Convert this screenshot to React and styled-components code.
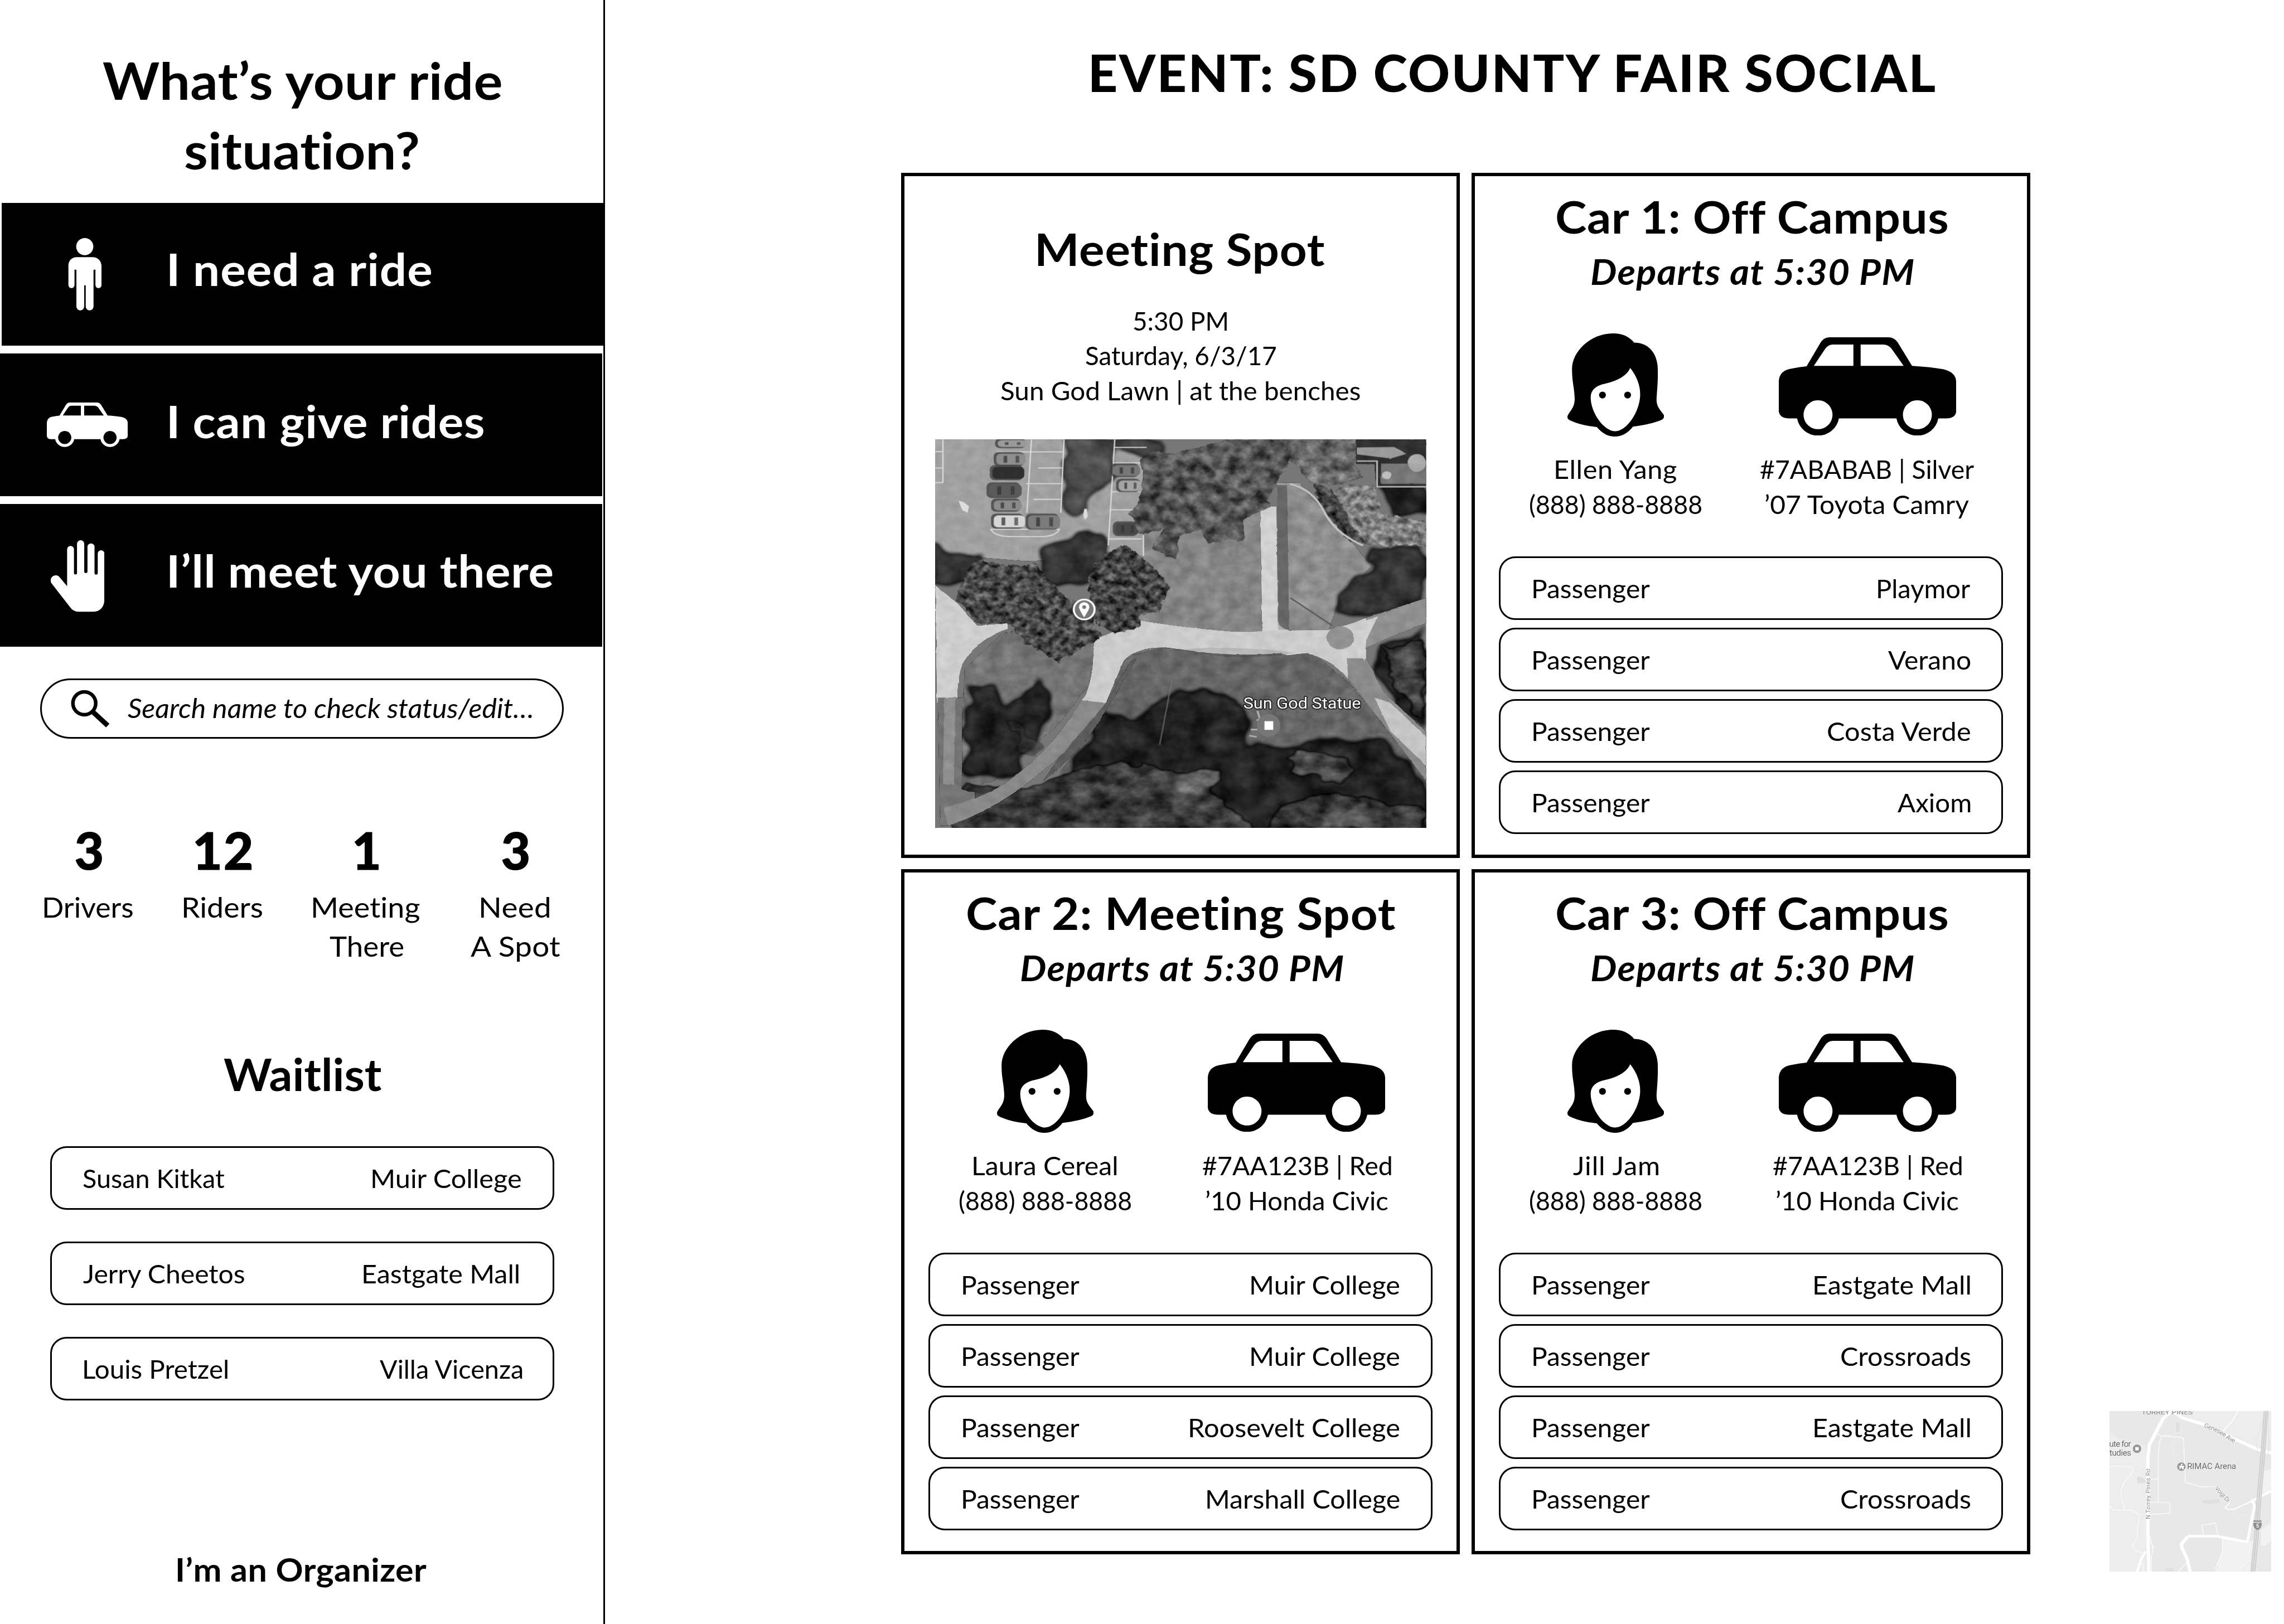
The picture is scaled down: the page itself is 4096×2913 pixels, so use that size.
import React, { useLayoutEffect, useRef, useState } from "react";
import styled, { createGlobalStyle } from "styled-components";

/* The design grid is 6000 units wide; u() converts a grid length to pixels. */
const u = (n) => `${((n * 4096) / 6000).toFixed(3)}px`;

const Global = createGlobalStyle`
  * { box-sizing: border-box; margin: 0; padding: 0; }
  body { background: #fff; color: #000; font-family: Lato, "Open Sans", sans-serif; overflow: hidden; }
`;

/* ---------- text ---------- */

const Ink = styled.span`
  display: inline-block;
  white-space: pre;
  font-variant-ligatures: none;
  transform-origin: 0 50%;
`;

/* Widens and tracks a run of text so that its ink is exactly `w` grid units wide. */
function Fit({ w, max = 1.07, children }) {
  const ref = useRef(null);
  const [style, setStyle] = useState({});
  useLayoutEffect(() => {
    const el = ref.current;
    const cs = getComputedStyle(el);
    const ctx = document.createElement("canvas").getContext("2d");
    ctx.font = `${cs.fontStyle} ${cs.fontWeight} ${cs.fontSize} ${cs.fontFamily}`;
    const m = ctx.measureText(children);
    const left = -m.actualBoundingBoxLeft;
    const right = m.width - m.actualBoundingBoxRight;
    const advance = el.offsetWidth;
    const natural = advance - left - right;
    const target = w ? (w * 4096) / 6000 : natural;
    const stretch = Math.max(0.97, Math.min(max, target / natural));
    const gaps = children.length - 1;
    const tracking = gaps > 0 ? (target / stretch - natural) / gaps : 0;
    const box = advance + tracking * children.length;
    setStyle({
      letterSpacing: `${tracking}px`,
      transform: `scaleX(${stretch})`,
      marginLeft: `${-left * stretch}px`,
      marginRight: `${target + left * stretch - box}px`,
    });
  }, [w, max, children]);
  return (
    <Ink ref={ref} style={style}>
      {children}
    </Ink>
  );
}

const Line = styled.div`
  display: flex;
  justify-content: center;
  height: ${(p) => u(p.$h)};
  padding-top: ${u(3)};
  line-height: ${(p) => u(p.$h)};
  font-size: ${(p) => u(p.$size)};
`;

const Display = styled(Line).attrs({ $size: 133.3 })`
  font-weight: 700;
`;
const Heading = styled(Line).attrs({ $size: 116.7, $h: 140 })`
  padding-left: ${u(5)};
  font-weight: 700;
`;
const Sub = styled(Line).attrs({ $size: 91.7, $h: 110 })`
  font-weight: 700;
  font-style: italic;
  margin-top: ${u(18.5)};
  padding-left: ${u(9)};
`;
const Body = styled(Line).attrs({ $size: 66.7, $h: 91.7 })`
  padding-left: ${u(1)};
  font-weight: 400;
`;

/* ---------- page ---------- */

const Page = styled.div`
  display: flex;
  width: 4096px;
  height: 2913px;
  background: #fff;
`;

const Sidebar = styled.aside`
  display: flex;
  flex-direction: column;
  flex: none;
  width: ${u(1589.5)};
  padding-top: ${u(115.5)};
  border-right: 3px solid #000;
`;

const Choices = styled.nav`
  display: flex;
  flex-direction: column;
  gap: ${u(21)};
  margin-top: ${u(50.5)};
`;

const Choice = styled.button`
  display: flex;
  align-items: center;
  height: ${u(374.7)};
  margin-left: ${(p) => (p.$inset ? "3px" : "0")};
  margin-right: ${(p) => (p.$inset ? "0" : "2px")};
  border: 0;
  background: #000;
  color: #fff;
  font: 700 ${u(116.7)} Lato, sans-serif;
  text-align: left;
`;

const ChoiceIcon = styled.span`
  display: flex;
  flex: none;
  width: ${(p) => u(p.$inset ? 441.5 : 446)};
  padding-left: ${(p) => u(p.$pad)};
  padding-top: ${(p) => u(p.$drop || 0)};
`;

const ChoiceLabel = styled.span`
  line-height: ${u(140)};
  padding-bottom: ${(p) => u(p.$lift)};
`;

const Search = styled.label`
  display: flex;
  align-items: center;
  width: ${u(1375)};
  height: ${u(158)};
  margin: ${u(84)} 0 0 ${u(106)};
  padding-left: ${u(75.5)};
  border: 3px solid #000;
  border-radius: ${u(79)};
  font-size: ${u(70)};
  font-style: italic;
`;

const SearchText = styled.span`
  margin-left: ${u(49)};
  padding-bottom: ${u(5)};
`;

const Stats = styled.section`
  display: flex;
  justify-content: space-between;
  margin: ${u(224)} ${u(114)} 0 ${u(116)};
`;

const Stat = styled.div`
  display: flex;
  flex-direction: column;
`;

const Count = styled(Line).attrs({ $size: 133.3, $h: 133 })`
  font-weight: 900;
  -webkit-text-stroke: ${u(1.5)} #000;
  margin-bottom: ${u(29.5)};
`;

const StatLabel = styled(Line).attrs({ $size: 75, $h: 103 })``;

const Waitlist = styled.section`
  margin-top: ${u(216)};
`;

const Pills = styled.ul`
  display: flex;
  flex-direction: column;
  list-style: none;
  gap: ${(p) => u(p.$gap)};
  margin: ${(p) => u(p.$top)} 0 0 ${(p) => u(p.$left)};
`;

const Pill = styled.li`
  display: flex;
  align-items: center;
  justify-content: space-between;
  width: ${u(1324)};
  height: ${u(167)};
  padding: ${u(1.5)} ${(p) => u((p.$end || 86) - 4.4)} 0 ${(p) => u(p.$start || 86.5)};
  border: 3px solid #000;
  border-radius: ${u(43)};
  font-size: ${u(66.7)};
`;

const Organizer = styled(Line).attrs({ $size: 83.3, $h: 100 })`
  font-weight: 700;
  margin-top: ${u(390)};
  padding-left: ${u(3)};
`;

const Main = styled.main`
  flex: 1;
  padding-top: ${u(107.5)};
`;

const EventTitle = styled(Display).attrs({ $h: 160 })`
  justify-content: flex-start;
  padding-left: ${u(1278)};
  font-weight: 900;
`;

const Board = styled.div`
  display: flex;
  gap: ${u(207)};
  padding-left: ${u(777.5)};
  margin-top: ${u(186.5)};
`;

const Cards = styled.div`
  display: grid;
  align-content: start;
  grid-template-columns: repeat(2, ${u(1468)});
  grid-auto-rows: ${u(1800)};
  gap: ${u(29.5)} ${u(31)};
`;

const Card = styled.article`
  border: 6px solid #000;
  padding-top: ${(p) => u(p.$top || 34)};
`;

const Details = styled.div`
  display: grid;
  grid-template-columns: ${u(740)} ${u(581)};
  margin-top: ${u(110.5)};
`;

const Portrait = styled.div`
  display: flex;
  align-items: center;
  justify-content: center;
  height: ${u(271)};
  margin-bottom: ${u(39)};
  padding-top: ${(p) => u(p.$drop || 0)};
`;

const When = styled.div`
  margin-top: ${u(74)};
`;

const Photo = styled.div`
  width: ${u(1290)};
  height: ${u(1021)};
  margin: ${u(85)} 0 0 ${u(81)};
  overflow: hidden;
`;

const Inset = styled.div`
  width: ${u(425)};
  height: ${u(422)};
  margin-top: ${u(3254)};
`;

const Svg = styled.svg`
  display: block;
  flex: none;
  width: ${(p) => (p.$w ? u(p.$w) : "100%")};
  height: ${(p) => (p.$h ? u(p.$h) : "100%")};
`;

/* ---------- icons ---------- */

const PersonIcon = () => (
  <Svg $w={88} $h={190} viewBox="0 0 88 190" fill="currentColor">
    <circle cx="44" cy="22.5" r="22.5" />
    <path d="M24 50H64C79 50 88 60 88 75V123.5a8 8 0 0 1-16 0V83h-5V180a10 10 0 0 1-20.500 0V124h-4V180a10 10 0 0 1-20.500 0V83h-5V123.500a8 8 0 0 1-16 0V75C0 60 9 50 24 50Z" />
  </Svg>
);

const CarIcon = ({ w, h }) => (
  <Svg $w={w} $h={h} viewBox="0 0 466 259" preserveAspectRatio="none" fill="currentColor">
    <path
      fillRule="evenodd"
      d="M73 76L108 17Q117 0 133 0H288Q303 0 312 13L350 75Q400 78 432 84Q466 92 466 118V195Q464 213 440 213H419A56 56 0 0 1 309 213H158A56 56 0 0 1 48 213H25Q3 213 0 195V115Q2 86 35 82Q52 78 73 76Z
      M92 75H196V19H142Q130 19 122 30Z M215 75H328L297 31Q288 19 274 19H215Z
      M103 165.500a38 38 0 1 0 .1 0Z M364 165.500a38 38 0 1 0 .1 0Z"
    />
  </Svg>
);

const HandIcon = () => (
  <Svg $w={141} $h={188} viewBox="0 0 141 188" fill="currentColor">
    <path d="M43 24a9 9 0 0 1 18 0V86a4 4 0 0 0 8 0V9.500a9.500 9.500 0 0 1 19 0V82a4 4 0 0 0 8.500 0V17.500a9.200 9.200 0 0 1 18.500 0V86a4 4 0 0 0 8.500 0V35a8.700 8.700 0 0 1 17.500 0V160Q137 188 110 188H75Q59 188 51 176L2 113A13 13 0 0 1 24 98L43 121Z" />
  </Svg>
);

const SearchIcon = () => (
  <Svg $w={101} $h={98} viewBox="0 0 101 98" fill="none" stroke="currentColor">
    <circle cx="35.500" cy="34.500" r="30" strokeWidth="9.500" />
    <path d="M58 57L97 93" strokeWidth="13" />
  </Svg>
);

const DriverIcon = () => (
  <Svg $w={254} $h={271} viewBox="0 0 254 271">
    <path d="M120 0C60 0 12 48 12 93C12 130 18 140 19 171C19 195 9 200 0 217Q-2 226 10 230Q40 243 77 246Q98 271 124 271Q152 271 172 245Q220 239 248 227Q256 222 253 214C240 196 234 192 234 172C237 130 238 120 237 87C234 48 210 24 175 24Q155 0 120 0Z" />
    <path
      fill="#fff"
      d="M165 91Q191 125 191 160C191 205 156 257 125 257C96 257 61 208 61 168Q61 140 100 132Q152 120 165 91Z"
    />
    <circle cx="92" cy="162" r="9" />
    <circle cx="158" cy="162" r="9" />
  </Svg>
);

/* ---------- aerial photo of the meeting spot ---------- */

const Grain = ({ id, freq, gain, seed, warp = 0, blur = 0 }) => (
  <filter id={id} x="-5%" y="-5%" width="110%" height="110%" colorInterpolationFilters="sRGB">
    <feTurbulence type="fractalNoise" baseFrequency={freq} numOctaves="4" seed={seed} result="n" />
    <feDisplacementMap in="SourceGraphic" in2="n" scale={warp} xChannelSelector="G" yChannelSelector="B" result="d" />
    <feGaussianBlur in="d" stdDeviation={blur} result="s" />
    <feColorMatrix
      in="n"
      type="matrix"
      values={`${gain} 0 0 0 ${0.5 - gain / 2} ${gain} 0 0 0 ${0.5 - gain / 2} ${gain} 0 0 0 ${0.5 - gain / 2} 0 0 0 0 1`}
      result="g"
    />
    <feComposite in="g" in2="s" operator="in" result="m" />
    <feComposite in="s" in2="m" operator="arithmetic" k1="0" k2="1" k3="1" k4="-0.5" result="o" />
    <feComposite in="o" in2="s" operator="in" />
  </filter>
);

const stalls = [
  [212, 38, 90, 26, "#9a9a9a"],
  [208, 90, 90, 42, "#8d8d8d"],
  [196, 140, 98, 46, "#2e2e2e"],
  [186, 206, 100, 48, "#5a5a5a"],
  [200, 268, 86, 38, "#8a8a8a"],
  [200, 325, 96, 46, "#d6d6d6"],
  [306, 325, 98, 50, "#7c7c7c"],
  [584, 192, 70, 40, "#a5a5a5"],
  [574, 355, 72, 44, "#484848"],
  [566, 134, 84, 40, "#777777"],
];

const AerialPhoto = () => (
  <Svg viewBox="20 35 1509 1482" preserveAspectRatio="none">
    <defs>
      <Grain id="ground" freq="0.022" gain={0.22} seed={4} warp={8} />
      <Grain id="shade" freq="0.014" gain={0.28} seed={12} warp={80} blur={11} />
      <Grain id="leaf" freq="0.025" gain={0.65} seed={7} warp={24} blur={0.6} />
      <Grain id="fine" freq="0.042" gain={0.75} seed={21} warp={26} />
      <Grain id="brush" freq="0.016 0.02" gain={0.5} seed={31} warp={70} blur={6} />
      <Grain id="road" freq="0.03" gain={0.1} seed={3} warp={5} />
    </defs>

    <rect x="20" y="35" width="1509" height="1482" fill="#777" />

    <g filter="url(#ground)">
      <path fill="#858585" d="M640 380L1030 280V780L640 760Z" />
      <path fill="#8e8e8e" d="M1070 200H1140L1200 290L1300 425L1360 520L1260 650L1230 765H1070Z" />
      <path fill="#656565" d="M610 860L720 830L1180 850L1290 960L1529 1330V1517H300L520 1080Z" />
      <path fill="#747474" d="M110 910L230 770L520 810L490 980L400 1120L200 1340L100 1370Z" />
    </g>

    <path fill="#a0a0a0" filter="url(#road)" d="M0 20H660V480L300 500L0 470Z" />

    <g filter="url(#shade)">
      <path fill="#4d4d4d" d="M420 20H570L580 130L545 230L440 330L412 290Z" />
      <path fill="#494949" d="M560 20H720V150L620 110Z" />
      <path fill="#323232" d="M340 460L420 410L460 370L540 400L560 520L500 600H330Z" />
      <path fill="#333" d="M0 430L130 460L170 500L110 600H0Z" />
      <path fill="#333" d="M1340 440L1529 440V640L1360 715L1250 700L1265 600L1350 530Z" />
      <path fill="#232323" d="M1375 200L1540 200V330L1420 320Z" />
      <path fill="#262626" d="M112 970L210 980L260 1060L320 930L400 1040L330 1180L280 1320H110Z" />
      <path fill="#222" d="M530 1060L620 1110L720 1020L830 960L900 1000L1000 1090L980 1200L1180 1190L1400 1180L1529 1330V1540H380L460 1230Z" />
      <path fill="#262626" d="M1390 820L1529 760V1150L1480 1110L1370 930Z" />
    </g>

    <g filter="url(#brush)">
      <path fill="#3a3a3a" d="M110 1340L290 1380L460 1290L600 1260L780 1300L900 1400L1000 1517V1540H60Z" />
      <path fill="#383838" d="M1100 1420L1240 1380L1529 1430V1540H1000Z" />
      <path fill="#646464" d="M770 1310L880 1285L900 1340L840 1400L770 1390Z" />
      <path fill="#4a4a4a" d="M1090 1240L1240 1230L1320 1290L1270 1350L1120 1310Z" />
      <path fill="#5c5c5c" d="M1200 1450L1330 1440V1517H1200Z" />
      <path fill="#3f3f3f" d="M1390 830L1529 790V1130L1440 1010Z" />
      <path fill="#777" d="M230 1100L260 1110L360 1220L330 1260L270 1200Z" opacity=".7" />
    </g>

    <g filter="url(#road)">
      <path fill="#d0d0d0" d="M1018 290H1070L1074 730Q1080 758 1110 762H1225L1240 840L1100 860L1024 800Z" />
      <path fill="#a0a0a0" opacity=".75" d="M1070 210H1102L1108 762H1074Z" />
      <path
        fill="#cbcbcb"
        d="M505 800L650 725Q780 752 940 768L1225 762L1290 740L1345 715L1345 925L1290 950Q1230 860 1130 845Q1000 865 860 850L730 830Q640 825 600 880L545 1040L440 1090L485 1000Q510 920 505 800Z"
      />
      <path fill="#cdcdcd" d="M20 590L90 660L150 745L240 735L245 758Q160 790 110 880Q90 920 88 1040H25Z" />
      <path fill="#737373" d="M28 1020H104L102 1370L143 1380L140 1450L60 1510H35Z" />
      <path fill="#8f8f8f" d="M48 1020H82L78 1350H44Z" />
      <path fill="#898989" d="M470 1030L545 1040L500 1120L400 1250L280 1370Q160 1470 60 1510L45 1440Q150 1410 230 1350Q380 1220 470 1030Z" />
      <path fill="#5d5d5d" d="M545 1040L620 880L640 870L540 1080Q470 1230 350 1340L400 1250Z" />
      <path fill="#8a8a8a" d="M1285 870L1345 870L1400 1000L1529 1150V1340L1420 1160L1290 950Z" />
      <path fill="#c4c4c4" d="M1370 1020L1420 1040L1529 1170V1280L1420 1150Z" />
      <path fill="#8f8f8f" d="M1345 715L1490 655L1529 640V735L1400 800L1340 835Z" />
      <path fill="#cfcfcf" d="M1290 745L1380 712L1345 800L1340 880L1290 800Z" />
      <ellipse cx="1265" cy="792" rx="42" ry="44" fill="#929292" />
      <path fill="#a9a9a9" d="M655 845Q800 830 870 860Q1000 875 1130 850Q1030 830 860 830Z" opacity=".6" />
    </g>

    <g stroke="#dcdcdc" strokeWidth="4" fill="none">
      <path d="M316 35L302 315M416 35L406 315M210 83H412M300 204H408M322 264H405M336 144H410" />
      <path d="M572 35L552 440M570 66H670M566 125H650M560 235H650M556 304H645M552 415H655M660 400V480" />
      <path d="M192 378Q200 406 260 406H350Q392 404 402 378Z" />
      <path d="M20 82H44M44 35V200M20 144H44M20 200H44" />
    </g>
    {stalls.map(([x, y, w, h, fill]) => (
      <g key={`${x}-${y}`}>
        <rect x={x - 8} y={y - 7} width={w + 4} height={h + 12} rx="16" fill="#3b3b3b" opacity=".75" />
        <rect x={x} y={y} width={w} height={h} rx="14" fill={fill} />
        <rect x={x + w * 0.25} y={y + 8} width={w * 0.12} height={h - 16} fill="#333" opacity=".75" />
        <rect x={x + w * 0.66} y={y + 8} width={w * 0.12} height={h - 16} fill="#333" opacity=".65" />
      </g>
    ))}
    <path fill="#ddd" d="M92 268L108 275L124 290L120 315L104 306L98 290Z" />
    <path fill="#ddd" d="M478 300H486L489 330L480 342L475 325Z" />

    <g filter="url(#leaf)">
      <path
        fill="#555"
        d="M655 110L690 80L760 90L850 55L930 35H1110L1130 70L1095 150L1060 220L1040 290L970 340L972 415L850 430L840 380L770 400L762 495L685 455L720 380L650 395L615 320L655 260Z"
      />
      <path fill="#666" d="M1110 35H1310V130L1340 180L1230 215L1170 195L1115 120Z" />
    </g>
    <g filter="url(#fine)">
      <path fill="#484848" d="M150 490L240 520L330 510L380 580L420 640L480 660L530 790L400 882L300 810L240 735L150 742L85 640L110 550Z" />
      <path fill="#444" d="M490 560L540 470L610 440L690 520L742 600L705 695L650 700V750L570 778L500 720Z" />
      <path fill="#808080" d="M1280 210L1370 210L1390 320L1529 350V440L1350 440L1250 340L1215 250Z" />
      <path fill="#444" d="M1180 205L1240 220L1290 340L1340 430L1300 430L1210 310Z" />
    </g>

    <g filter="url(#road)">
      <path fill="#303030" d="M1312 35H1529V220H1375L1370 130H1312Z" />
      <path fill="#999" d="M1316 66L1430 64L1470 90L1420 108L1316 92Z" />
      <path fill="#777" d="M1390 128H1529V205H1390Z" />
      <ellipse cx="1500" cy="125" rx="28" ry="34" fill="#aaa" />
      <circle cx="1408" cy="172" r="15" fill="#bbb" />
    </g>
    <path d="M1316 118H1378V216H1529" fill="none" stroke="#c0c0c0" strokeWidth="5" />
    <path d="M1110 205Q1180 225 1215 310T1335 440" fill="none" stroke="#c4c4c4" strokeWidth="7" />
    <path d="M750 940L710 1200" stroke="#777" strokeWidth="5" opacity=".6" />
    <path d="M1112 640L1240 745" stroke="#5a5a5a" strokeWidth="5" />
    <path fill="none" stroke="#b0b0b0" strokeWidth="6" d="M1010 1070L1018 1100L1008 1108M990 1142H1010M985 1165L1008 1170" />

    <ellipse cx="478" cy="684" rx="32" ry="38" fill="#777" stroke="#fff" strokeWidth="6" />
    <path fill="#fff" d="M478 714Q462 684 462 675A16 19 0 0 1 494 675Q494 684 478 714Z" />
    <ellipse cx="478" cy="675" rx="6" ry="7" fill="#777" />
    <ellipse cx="1045" cy="1126" rx="36" ry="44" fill="#777" />
    <rect x="1032" y="1110" width="27" height="33" fill="#fff" />
    <text
      transform="translate(967 1062) scale(1.17 1.452)"
      fontFamily="Roboto, sans-serif"
      fontSize="41"
      textLength="309"
      lengthAdjust="spacingAndGlyphs"
      fill="#fff"
      stroke="#222"
      strokeWidth="5"
      strokeLinejoin="round"
      paintOrder="stroke"
    >
      Sun God Statue
    </text>
  </Svg>
);

/* ---------- street map ---------- */

const StreetMap = () => (
  <Svg viewBox="124 84 1274 1265" fill="none" fontFamily="Roboto, sans-serif">
    <rect x="124" y="84" width="1274" height="1265" fill="#e8e8e8" />
    <path fill="#ededed" d="M124 240Q160 300 300 330L410 355V1349H124Z" />
    <path fill="#ededed" d="M640 84H1398V400L1130 330L860 190Z" />
    <path fill="#f2f2f2" d="M1014 1085L1200 1118L1255 1100L1230 1349H968L1014 1190Z" />
    <path fill="#f2f2f2" d="M1330 560L1398 540V700L1320 750ZM1320 1020L1398 955V1110L1350 1143H1316Z" />
    <path fill="#dfdfdf" d="M340 605L375 602L408 625V650L345 652ZM856 785L990 780V805L915 816L860 810ZM568 1322L620 1320L636 1349H565ZM648 180L662 168L677 182V245H648Z" />
    <g stroke="#efefef" strokeWidth="4">
      <path d="M637 250V180L662 160L687 182V250ZM615 320L700 308M615 320L626 482H715M1096 880L1120 845L1240 810M1096 880L1112 920L1220 895" />
    </g>
    <g stroke="#fff" strokeWidth="5">
      <path d="M498 260L540 285L690 290L707 300L722 645L850 683L958 678M535 285L515 335L507 480V800M540 276H606M450 620H507M440 803L600 805V888L440 900" />
      <path d="M124 530L160 517L300 522L312 550L290 590L245 635L217 700V765L246 862M124 832L155 864L300 866L360 903L355 960L343 1010L347 1075L307 1143L328 1183L385 1202M370 1280L388 1290V1349" />
      <path d="M440 1060L455 1130L470 1155L450 1250L456 1349M450 1162L470 1155M850 983L960 967L976 1056M850 983L864 1056M1014 1085V1190L962 1320L966 1349M730 1280L665 1349M1014 1190L975 1300" />
      <path strokeWidth="8" d="M1070 805L1035 845L1060 860L1110 856L1240 795M1135 84L1090 165L1015 245" />
    </g>
    <g stroke="#fff" strokeLinejoin="round">
      <path strokeWidth="27" d="M610 84L545 145L490 250L438 350L426 450V1040L434 1349" />
      <path strokeWidth="24" d="M640 98L700 138L860 188L1110 305L1300 390L1398 415" />
      <path strokeWidth="20" d="M410 1190L375 1245L342 1349M1250 795L1266 830L1240 960L1210 1115L1020 1080L975 1070H740" />
      <path strokeWidth="26" d="M740 1073L692 1130V1155L735 1250L760 1349" />
      <path strokeWidth="18" d="M1240 795L1398 715" />
    </g>
    <path d="M1330 150L1280 340L1300 450M1378 84V420L1340 500M1165 1349L1240 1270M1280 1300L1330 1349" stroke="#dadada" strokeWidth="3" />
    <path d="M1357 84L1330 450L1300 800L1280 1080L1253 1349" stroke="#dedede" strokeWidth="34" />
    <path d="M1342 84L1314 450L1284 800L1266 1080L1238 1349M1371 84L1345 450L1316 800L1296 1080L1269 1349M1357 84L1330 450L1300 800L1280 1080L1253 1349" stroke="#c6c6c6" strokeWidth="5" />
    <g stroke="#fff" strokeWidth="7" strokeLinejoin="round" paintOrder="stroke">
      <text x="376" y="109" fontSize="46" textLength="404" lengthAdjust="spacingAndGlyphs" fill="#8c8c8c" stroke="none">
        TORREY PINES
      </text>
      <path id="genesee" stroke="none" d="M866 212Q960 240 1030 290T1130 345" />
      <text fontSize="50" fill="#8e8e8e">
        <textPath href="#genesee" textLength="270">
          Genesee Ave
        </textPath>
      </text>
      <text transform="translate(444 936) rotate(-90)" fontSize="48" textLength="398" fill="#8e8e8e">
        N Torrey Pines Rd
      </text>
      <text transform="translate(952 695) rotate(48)" fontSize="48" textLength="152" fill="#8e8e8e">
        Voigt Dr
      </text>
      <g fill="#6a6a6a" stroke="#f2f2f2">
        <text x="122" y="365" fontSize="66" textLength="172">
          ute for
        </text>
        <text x="124" y="437" fontSize="66" textLength="171">
          tudies
        </text>
        <text x="735" y="542" fontSize="66" textLength="387">
          RIMAC Arena
        </text>
      </g>
    </g>
    <circle cx="341" cy="381" r="33" fill="#959595" />
    <rect x="327" y="368" width="27" height="26" fill="#fff" />
    <circle cx="690" cy="522" r="33" fill="#959595" />
    <path fill="#fff" d="M687 500h14v9h-8v6h20v8h-5v15h5v4h-19v-12h-10v12h-13v-4h5v-15h-5v-8h16Z" />
    <path fill="#909090" d="M1258 948L1268 943L1278 949L1290 942L1302 949L1312 943L1322 948L1323 980Q1320 1010 1290 1022Q1260 1010 1257 980Z" />
    <path d="M1256 960H1324" stroke="#fff" strokeWidth="5" />
    <text x="1279" y="1004" fontSize="42" fontWeight="700" fill="#fff">
      5
    </text>
  </Svg>
);

/* ---------- content ---------- */

const choices = [
  { label: "I need a ride", w: 688, icon: <PersonIcon />, pad: 174.5, lift: 25, inset: true },
  { label: "I can give rides", w: 825, icon: <CarIcon w={212.5} h={117} />, pad: 122.5, lift: 17 },
  { label: "I’ll meet you there", w: 1007, icon: <HandIcon />, pad: 133, lift: 25, drop: 5 },
];

const stats = [
  { n: "3", lines: [["Drivers", 234]] },
  { n: "12", nw: 148, lines: [["Riders", 207]] },
  { n: "1", lines: [["Meeting", 280], ["There", 195]] },
  { n: "3", lines: [["Need", 181], ["A Spot", 235]] },
];

const waiting = [
  { name: ["Susan Kitkat", 371], place: ["Muir College", 390], end: 87 },
  { name: ["Jerry Cheetos", 423], place: ["Eastgate Mall", 407], end: 93 },
  { name: ["Louis Pretzel", 377], place: ["Villa Vicenza", 375], start: 85.5, end: 84 },
];

const cars = [
  {
    title: ["Car 1: Off Campus", 1025],
    driver: ["Ellen Yang", 317],
    plate: ["#7ABABAB | Silver", 562],
    model: ["’07 Toyota Camry", 536],
    riders: [["Playmor", 242], ["Verano", 215], ["Costa Verde", 374], ["Axiom", 192]],
  },
  {
    title: ["Car 2: Meeting Spot", 1124],
    driver: ["Laura Cereal", 376],
    plate: ["#7AA123B | Red", 495],
    model: ["’10 Honda Civic", 478],
    riders: [["Muir College", 389], ["Muir College", 389], ["Roosevelt College", 550], ["Marshall College", 505]],
  },
  {
    title: ["Car 3: Off Campus", 1025],
    driver: ["Jill Jam", 225],
    plate: ["#7AA123B | Red", 495],
    model: ["’10 Honda Civic", 478],
    riders: [["Eastgate Mall", 408], ["Crossroads", 338], ["Eastgate Mall", 408], ["Crossroads", 338]],
  },
];

const Text = ({ t }) => <Fit w={t[1]}>{t[0]}</Fit>;

const CarCard = ({ car }) => (
  <Card>
    <Heading as="h2"><Text t={car.title} /></Heading>
    <Sub><Fit w={847}>Departs at 5:30 PM</Fit></Sub>
    <Details>
      <div>
        <Portrait><DriverIcon /></Portrait>
        <Body><Text t={car.driver} /></Body>
        <Body><Fit w={451}>(888) 888-8888</Fit></Body>
      </div>
      <div>
        <Portrait $drop={8}><CarIcon w={466} h={259} /></Portrait>
        <Body><Text t={car.plate} /></Body>
        <Body><Text t={car.model} /></Body>
      </div>
    </Details>
    <Pills $gap={20.6} $top={93} $left={63}>
      {car.riders.map((r, i) => (
        <Pill key={i}>
          <Fit w={306}>Passenger</Fit>
          <Text t={r} />
        </Pill>
      ))}
    </Pills>
  </Card>
);

export default function App() {
  return (
    <>
      <Global />
      <Page>
        <Sidebar>
          <h1>
            <Display as="span" $h={183.5}><Fit w={1047}>What’s your ride</Fit></Display>
            <Display as="span" $h={183.5}><Fit w={612}>situation?</Fit></Display>
          </h1>
          <Choices>
            {choices.map((c) => (
              <Choice key={c.label} $inset={c.inset}>
                <ChoiceIcon $pad={c.pad} $inset={c.inset} $drop={c.drop}>{c.icon}</ChoiceIcon>
                <ChoiceLabel $lift={c.lift}><Fit w={c.w}>{c.label}</Fit></ChoiceLabel>
              </Choice>
            ))}
          </Choices>
          <Search>
            <SearchIcon />
            <SearchText><Fit w={1062}>Search name to check status/edit…</Fit></SearchText>
          </Search>
          <Stats>
            {stats.map((s, i) => (
              <Stat key={i}>
                <Count><Fit w={s.nw} max={1.02}>{s.n}</Fit></Count>
                {s.lines.map((l) => (
                  <StatLabel key={l[0]}><Text t={l} /></StatLabel>
                ))}
              </Stat>
            ))}
          </Stats>
          <Waitlist>
            <Heading as="h2"><Fit w={416}>Waitlist</Fit></Heading>
            <Pills $gap={83.5} $top={123} $left={131.5}>
              {waiting.map((p) => (
                <Pill key={p.name[0]} $start={p.start || 82.5} $end={p.end}>
                  <Text t={p.name} />
                  <Text t={p.place} />
                </Pill>
              ))}
            </Pills>
          </Waitlist>
          <Organizer><Fit w={656}>I’m an Organizer</Fit></Organizer>
        </Sidebar>
        <Main>
          <EventTitle as="h1"><Fit w={2218} max={1.02}>EVENT: SD COUNTY FAIR SOCIAL</Fit></EventTitle>
          <Board>
            <Cards>
              <Card $top={118}>
                <Heading as="h2"><Fit w={754}>Meeting Spot</Fit></Heading>
                <When>
                  <Body><Fit w={246}>5:30 PM</Fit></Body>
                  <Body><Fit w={500}>Saturday, 6/3/17</Fit></Body>
                  <Body><Fit w={943}>Sun God Lawn | at the benches</Fit></Body>
                </When>
                <Photo><AerialPhoto /></Photo>
              </Card>
              {cars.map((c, i) => (
                <CarCard key={i} car={c} />
              ))}
            </Cards>
            <Inset><StreetMap /></Inset>
          </Board>
        </Main>
      </Page>
    </>
  );
}
